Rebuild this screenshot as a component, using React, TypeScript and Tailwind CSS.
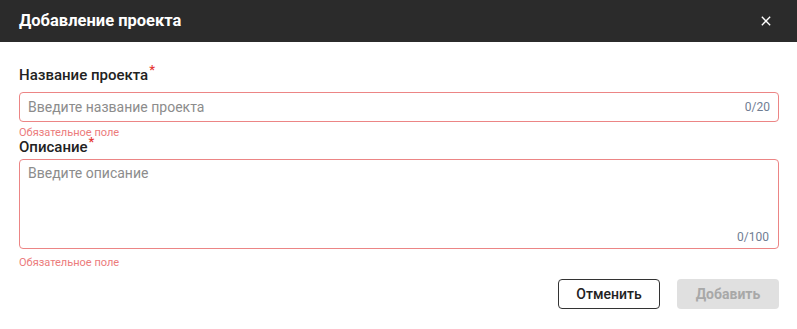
import React, { useState } from 'react';

const Required = () => (
  <span className="relative -top-[6px] ml-[1px] text-[13px] leading-none text-[#e53935]">*</span>
);

export default function App() {
  const [name, setName] = useState('');
  const [desc, setDesc] = useState('');

  return (
    <div className="w-[797px] h-[329px] bg-white font-['Roboto',sans-serif] overflow-hidden">
      {/* Header */}
      <div className="h-[42px] bg-[#2b2b2b] flex items-center justify-between pl-[19px] pr-[24px]">
        <h2 className="text-[16.5px] font-bold text-white leading-none">Добавление проекта</h2>
        <button className="text-white flex items-center justify-center w-[14px] h-[14px]">
          <svg viewBox="0 0 12 12" className="w-[10px] h-[10px]" fill="none" stroke="currentColor" strokeWidth="1.6">
            <path d="M1 1 L11 11 M11 1 L1 11" />
          </svg>
        </button>
      </div>

      {/* Body */}
      <div className="pl-[19px] pr-[18px] pt-[23px]">
        <label className="block text-[15px] font-medium leading-[20px] text-[#222]">
          Название проекта<Required />
        </label>
        <div className="mt-[7px] h-[30px] border border-[#ec8585] rounded-[4px] flex items-center pl-[8px] pr-[8px]">
          <input
            value={name}
            onChange={(e) => setName(e.target.value.slice(0, 20))}
            placeholder="Введите название проекта"
            className="flex-1 text-[14px] text-[#222] placeholder:text-[#8c8c8c] outline-none bg-transparent"
          />
          <span className="text-[12px] text-[#6f7d93]">{name.length}/20</span>
        </div>
        <div className="mt-[5px] text-[11px] leading-[12px] text-[#ec7b7b]">Обязательное поле</div>

        <label className="block -mt-[2px] text-[15px] font-medium leading-[20px] text-[#222]">
          Описание<Required />
        </label>
        <div className="mt-[2px] h-[90px] border border-[#ec8585] rounded-[4px] flex flex-col pl-[8px] pr-[9px] pt-[3px] pb-[4px]">
          <textarea
            value={desc}
            onChange={(e) => setDesc(e.target.value.slice(0, 100))}
            placeholder="Введите описание"
            className="flex-1 resize-none text-[14px] leading-[20px] text-[#222] placeholder:text-[#8c8c8c] outline-none bg-transparent"
          />
          <span className="self-end text-[12px] leading-[14px] text-[#6f7d93]">{desc.length}/100</span>
        </div>
        <div className="mt-[8px] text-[11px] leading-[12px] text-[#ec7b7b]">Обязательное поле</div>

        <div className="mt-[10px] flex justify-end gap-[17px]">
          <button className="w-[102px] h-[30px] border border-[#333] rounded-[4px] text-[14px] font-medium text-[#222]">
            Отменить
          </button>
          <button disabled className="w-[102px] h-[30px] rounded-[4px] bg-[#e0e0e0] text-[14px] font-bold text-[#a8a8a8]">
            Добавить
          </button>
        </div>
      </div>
    </div>
  );
}
